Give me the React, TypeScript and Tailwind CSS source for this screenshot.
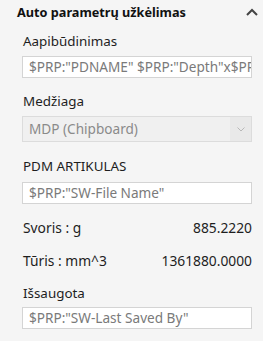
import React from "react";

const font = { fontFamily: '"Segoe UI", "Noto Sans", "Open Sans", sans-serif' };

const Label: React.FC<{ children: React.ReactNode }> = ({ children }) => (
  <div className="text-[13.4px] leading-[20px] text-[#1e1e1e] pl-[1px]">{children}</div>
);

const TextBox: React.FC<{ value: string }> = ({ value }) => (
  <div className="h-[22px] bg-white border border-[#d4d4d4] px-[6px] text-[13.6px] leading-[20px] text-[#7a7a7a] whitespace-nowrap overflow-hidden">
    {value}
  </div>
);

const ValueRow: React.FC<{ label: string; value: string }> = ({ label, value }) => (
  <div className="flex justify-between text-[13.8px] leading-[20px] text-[#1e1e1e] pl-[1px]">
    <span>{label}</span>
    <span>{value}</span>
  </div>
);

export default function App() {
  return (
    <div className="w-[263px] h-[341px] bg-[#f5f5f5] overflow-hidden" style={font}>
      <div className="flex items-center justify-between pl-[17px] pr-[4px] pt-[4px] h-[22px]">
        <span className="text-[12.7px] font-bold text-[#111]">Auto parametrų užkėlimas</span>
        <svg width="12" height="8" viewBox="0 0 12 8" className="mr-[1px] -mt-[3px]">
          <path d="M1 7 L6 2 L11 7" fill="none" stroke="#444" strokeWidth="2" />
        </svg>
      </div>
      <div className="pl-[22px] pr-[11px] pt-[9px] flex flex-col">
        <Label>Aapibūdinimas</Label>
        <div className="mt-[5px]">
          <TextBox value={'$PRP:"PDNAME" $PRP:"Depth"x$PRP:"Width"'} />
        </div>
        <div className="mt-[13px]">
          <Label>Medžiaga</Label>
        </div>
        <div className="mt-[5px] h-[26px] flex bg-[#f0f0f0] border border-[#dcdcdc]">
          <div className="flex-1 px-[6px] text-[13.6px] leading-[24px] text-[#8a8a8a]">MDP (Chipboard)</div>
          <div className="w-[21px] bg-[#e9e9e9] flex items-center justify-center">
            <svg width="8" height="5" viewBox="0 0 8 5">
              <path d="M0.5 0.5 L4 4 L7.5 0.5" fill="none" stroke="#b8b8b8" strokeWidth="1" />
            </svg>
          </div>
        </div>
        <div className="mt-[14px]">
          <Label>PDM ARTIKULAS</Label>
        </div>
        <div className="mt-[6px]">
          <TextBox value={'$PRP:"SW-File Name"'} />
        </div>
        <div className="mt-[14px]">
          <ValueRow label="Svoris : g" value="885.2220" />
        </div>
        <div className="mt-[13px]">
          <ValueRow label="Tūris : mm^3" value="1361880.0000" />
        </div>
        <div className="mt-[12px]">
          <Label>Išsaugota</Label>
        </div>
        <div className="mt-[4px]">
          <TextBox value={'$PRP:"SW-Last Saved By"'} />
        </div>
      </div>
    </div>
  );
}
